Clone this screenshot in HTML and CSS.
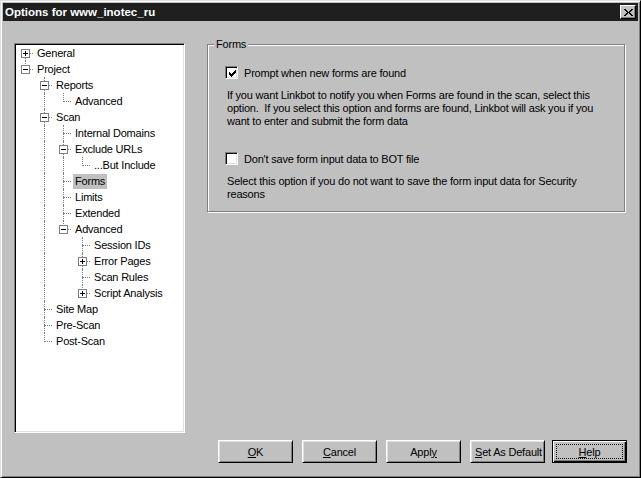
FILE: index.html
```html
<!DOCTYPE html>
<html lang="en">
  <head>
    <meta charset="UTF-8" />
    <title>Options for www_inotec_ru</title>
    <link rel="stylesheet" href="styles.css">
  </head>
  <body>
    <div class="window">
      <div class="titlebar">
        <span class="title">Options for www_inotec_ru</span>
        <span class="close">
          <svg width="9" height="7" viewBox="0 0 9 7" shape-rendering="crispEdges">
            <path d="M0 0h2v1H0zM7 0h2v1H7zM1 1h2v1H1zM6 1h2v1H6zM2 2h2v1H2zM5 2h2v1H5zM3 3h3v1H3zM2 4h2v1H2zM5 4h2v1H5zM1 5h2v1H1zM6 5h2v1H6zM0 6h2v1H0zM7 6h2v1H7z" fill="#000"/>
          </svg>
        </span>
      </div>

      <div class="dialog">
        <div class="main">
          <!-- tree: each row = connector cells + label -->
          <div class="tree">
            <div class="row"><i class="f"><b class="plus"></b></i><span>General</span></div>
            <div class="row"><i class="l"><b></b></i><span>Project</span></div>
            <div class="row"><i></i><i class="t"><b></b></i><span>Reports</span></div>
            <div class="row"><i></i><i class="v"></i><i class="l"></i><span>Advanced</span></div>
            <div class="row"><i></i><i class="t"><b></b></i><span>Scan</span></div>
            <div class="row"><i></i><i class="v"></i><i class="t"></i><span>Internal Domains</span></div>
            <div class="row"><i></i><i class="v"></i><i class="t"><b></b></i><span>Exclude URLs</span></div>
            <div class="row"><i></i><i class="v"></i><i class="v"></i><i class="l"></i><span>...But Include</span></div>
            <div class="row"><i></i><i class="v"></i><i class="t"></i><span class="selected">Forms</span></div>
            <div class="row"><i></i><i class="v"></i><i class="t"></i><span>Limits</span></div>
            <div class="row"><i></i><i class="v"></i><i class="t"></i><span>Extended</span></div>
            <div class="row"><i></i><i class="v"></i><i class="l"><b></b></i><span>Advanced</span></div>
            <div class="row"><i></i><i class="v"></i><i></i><i class="t"></i><span>Session IDs</span></div>
            <div class="row"><i></i><i class="v"></i><i></i><i class="t"><b class="plus"></b></i><span>Error Pages</span></div>
            <div class="row"><i></i><i class="v"></i><i></i><i class="t"></i><span>Scan Rules</span></div>
            <div class="row"><i></i><i class="v"></i><i></i><i class="l"><b class="plus"></b></i><span>Script Analysis</span></div>
            <div class="row"><i></i><i class="t"></i><span>Site Map</span></div>
            <div class="row"><i></i><i class="t"></i><span>Pre-Scan</span></div>
            <div class="row"><i></i><i class="l"></i><span>Post-Scan</span></div>
          </div>

          <div class="group">
            <span class="group-title">Forms</span>
            <div class="check">
              <span class="box">
                <svg width="7" height="7" viewBox="0 0 7 7" shape-rendering="crispEdges">
                  <path d="M6 0h1v1H6zM5 1h2v1H5zM0 2h1v1H0zM4 2h3v1H4zM0 3h2v1H0zM3 3h3v1H3zM0 4h5v1H0zM1 5h3v1H1zM2 6h1v1H2z" fill="#000"/>
                </svg>
              </span>
              Prompt when new forms are found
            </div>
            <p>
              If you want Linkbot to notify you when Forms are found in the scan, select this<br />
              option.&nbsp; If you select this option and forms are found, Linkbot will ask you if you<br />
              want to enter and submit the form data
            </p>
            <div class="check second">
              <span class="box"></span>
              Don't save form input data to BOT file
            </div>
            <p>
              Select this option if you do not want to save the form input data for Security<br />
              reasons
            </p>
          </div>
        </div>

        <div class="buttons">
          <div class="btn"><span><u>O</u>K</span></div>
          <div class="btn"><span><u>C</u>ancel</span></div>
          <div class="btn"><span>Appl<u>y</u></span></div>
          <div class="btn"><span><u>S</u>et As Default</span></div>
          <div class="btn default"><span><u>H</u>elp</span></div>
        </div>
      </div>
    </div>
  </body>
</html>
```

FILE: styles.css
```css
* {
  box-sizing: border-box;
}
html,
body {
  margin: 0;
}
body {
  font-family: "Liberation Sans", Arial, sans-serif;
  font-size: 11px;
  letter-spacing: -0.2px;
  color: #000;
  background: #c0c0c0;
}

.window {
  width: 641px;
  height: 478px;
  padding: 2px;
  display: flex;
  flex-direction: column;
  background: #c0c0c0;
  border: 1px solid;
  border-color: #dfdfdf #000 #000 #dfdfdf;
  box-shadow: inset 1px 1px #fff, inset -1px -1px #808080;
}

.titlebar {
  height: 18px;
  display: flex;
  align-items: center;
  justify-content: space-between;
  padding: 0 2px 0 2px;
  background: #1f1f1f;
}
.title {
  color: #fff;
  font-weight: bold;
  font-size: 11.5px;
  letter-spacing: 0;
}
.close {
  width: 16px;
  height: 14px;
  display: flex;
  align-items: center;
  justify-content: center;
  background: #c0c0c0;
  border: 1px solid;
  border-color: #fff #000 #000 #fff;
  box-shadow: inset -1px -1px #808080;
}

.dialog {
  flex: 1;
  display: flex;
  flex-direction: column;
  padding: 22px 11px 0;
}
.main {
  display: flex;
  align-items: flex-start;
  gap: 22px;
}

/* tree view */
.tree {
  width: 171px;
  height: 390px;
  padding: 1px;
  background: #fff;
  border: 1px solid;
  border-color: #808080 #fff #fff #808080;
  box-shadow: inset 1px 1px #000, inset -1px -1px #dfdfdf;
}
.row {
  display: flex;
  height: 16px;
}
.row span {
  height: 15px;
  margin-top: 1px;
  padding: 0 2px;
  line-height: 15px;
  white-space: nowrap;
}
.row span.selected {
  background: #c0c0c0;
}
.tree i {
  position: relative;
  flex: none;
  width: 19px;
  height: 16px;
}
.tree i::before,
.tree i::after {
  content: "";
  position: absolute;
  left: 9px;
}
.v::before,
.t::before {
  top: 0;
  bottom: 0;
  border-left: 1px dotted #808080;
}
.l::before {
  top: 0;
  height: 9px;
  border-left: 1px dotted #808080;
}
.f::before {
  top: 8px;
  bottom: 0;
  border-left: 1px dotted #808080;
}
.t::after,
.l::after,
.f::after {
  top: 8px;
  left: 11px;
  width: 8px;
  border-top: 1px dotted #808080;
}
.tree b {
  position: absolute;
  z-index: 1;
  left: 5px;
  top: 4px;
  width: 9px;
  height: 9px;
  background: #fff;
  border: 1px solid #808080;
}
.tree b::before {
  content: "";
  position: absolute;
  left: 1px;
  top: 3px;
  width: 5px;
  height: 1px;
  background: #000;
}
.tree b.plus::after {
  content: "";
  position: absolute;
  left: 3px;
  top: 1px;
  width: 1px;
  height: 5px;
  background: #000;
}

/* group box */
.group {
  position: relative;
  width: 418px;
  height: 168px;
  margin-top: 1px;
  padding: 21px 0 0 17px;
  border: 1px solid #808080;
  box-shadow: inset 1px 1px #fff, 1px 1px #fff;
}
.group-title {
  position: absolute;
  top: -7px;
  left: 6px;
  padding: 0 2px;
  line-height: 13px;
  background: #c0c0c0;
}
.check {
  display: flex;
  align-items: center;
  gap: 6px;
  height: 13px;
  white-space: nowrap;
}
.check.second {
  margin-top: 24px;
}
.box {
  width: 13px;
  height: 13px;
  padding: 3px 0 0 3px;
  background: #fff;
  border: 1px solid;
  border-color: #808080 #fff #fff #808080;
  box-shadow: inset 1px 1px #000, inset -1px -1px #dfdfdf;
}
.box svg {
  display: block;
}
.group p {
  margin: 10px 0 0 2px;
  line-height: 13px;
  white-space: nowrap;
}

/* buttons */
.buttons {
  display: flex;
  justify-content: flex-end;
  margin-top: 7px;
}
.btn {
  width: 75px;
  height: 23px;
  padding: 3px;
  display: flex;
  background: #c0c0c0;
  border: 1px solid;
  border-color: #fff #000 #000 #fff;
  box-shadow: inset 1px 1px #dfdfdf, inset -1px -1px #808080;
}
.btn + .btn {
  margin-left: 9px;
}
.btn span {
  flex: 1;
  display: flex;
  align-items: center;
  justify-content: center;
  border: 1px dotted transparent;
  white-space: nowrap;
}
.btn.default {
  margin-left: 7px;
  border-color: #000;
  box-shadow: inset 1px 1px #fff, inset -1px -1px #000, inset -2px -2px #808080;
}
.btn.default span {
  border-color: #000;
}
```
